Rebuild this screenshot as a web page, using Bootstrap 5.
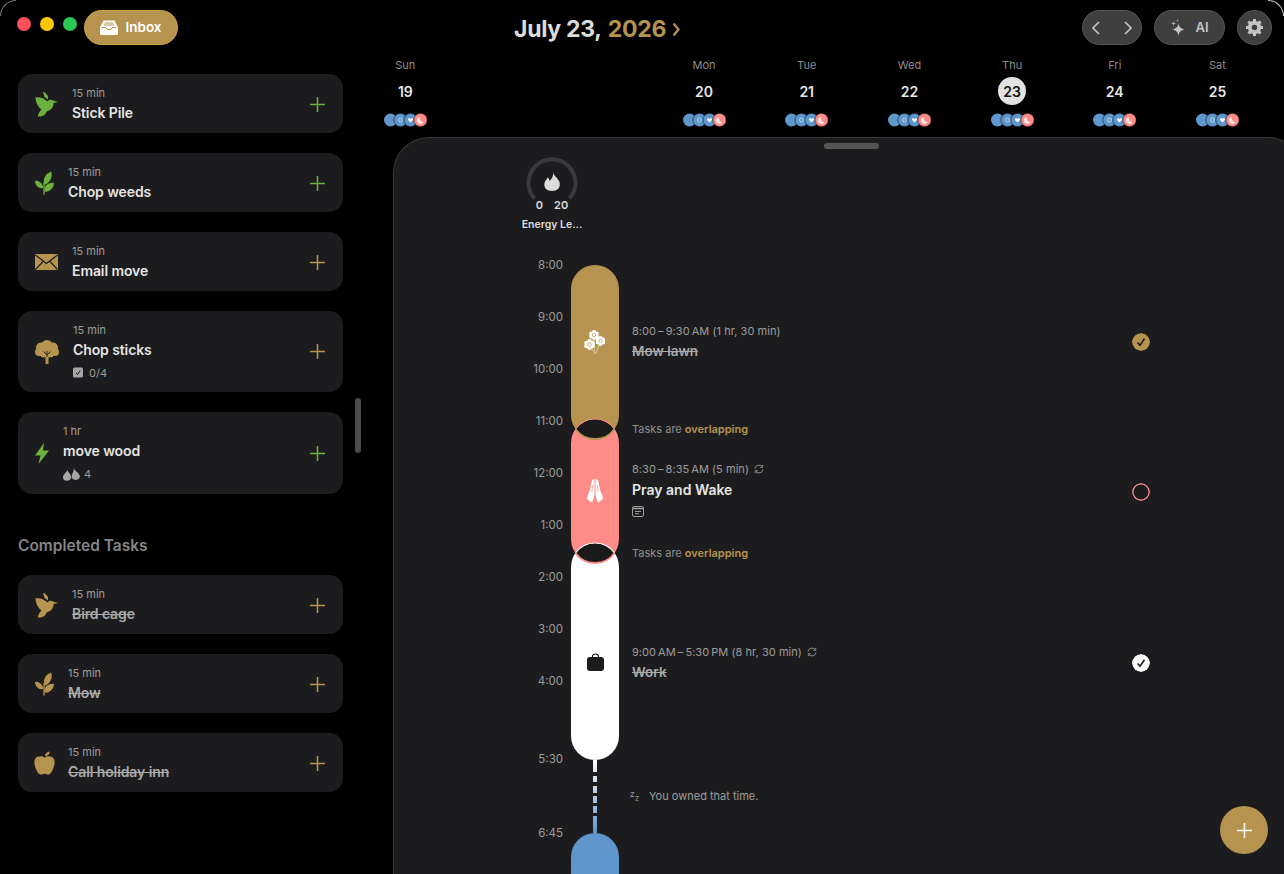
<!DOCTYPE html>
<html>

<head>
  <meta charset="utf-8">
  <meta name="viewport" content="width=device-width">
  <title>Inbox</title>
  <link href="https://cdn.jsdelivr.net/npm/bootstrap@5.3.2/dist/css/bootstrap.min.css" rel="stylesheet">
  <script src="https://cdn.jsdelivr.net/npm/bootstrap@5.3.2/dist/js/bootstrap.bundle.min.js"></script>
  <style>
    :root {
      --gold: #b6944f;
      --green: #6cb03e;
      --pink: #fd8b88;
      --blue: #5f96cc;
      --panel: #1c1c1e;
    }

    body {
      background: #000;
      font-family: Inter, "Liberation Sans", sans-serif;
      overflow: hidden;
      color: #e0e0e0;
    }

    .app-shell { width: 1284px; height: 874px; position: relative; overflow: hidden; }
    .side-col { width: 354px; flex: none; padding-left: 18px; position: relative; }
    .main-col { width: 930px; flex: none; }

    .title-strip { height: 74px; padding-top: 10px; margin-left: -18px; }
    .traffic { width: 14px; height: 14px; border-radius: 50%; margin-top: 7px; }
    .traffic-r { background: #ff4f58; margin-left: 17px; }
    .traffic-y { background: #ffc700; margin-left: 9px; }
    .traffic-g { background: #2bc653; margin-left: 9px; }
    .inbox-pill {
      margin-left: 7px; height: 35px; width: 94px; border-radius: 18px;
      background: var(--gold); border: 1px solid #cda73f; color: #fff;
      font-size: 13.5px; font-weight: 600; gap: 7px;
    }

    .task-card {
      width: 325px; min-height: 59px; margin-bottom: 20px; padding: 12px 18px 10px 17px;
      background: var(--panel); border-radius: 14px; gap: 14px;
    }
    .task-card > svg:first-child, .task-plus { margin-top: -1px; }
    .task-tall { height: 81px; padding: 11px 18px 11px 17px; }
    .task-taller { height: 82px; padding: 11px 18px 11px 17px; }
    .task-time { font-size: 11px; line-height: 14px; color: #9c9c9c; }
    .task-name { font-size: 14px; line-height: 20px; margin-top: 3px; font-weight: 600; color: #e4e4e4; letter-spacing: -.1px; }
    .task-done { color: #a9a9a9; text-decoration: line-through; }
    .task-sub { font-size: 11px; line-height: 16px; margin-top: 5px; color: #9c9c9c; gap: 5px; }
    .task-taller .task-sub { gap: 4px; }
    .task-plus { margin-left: auto; flex: none; }
    .task-tall .task-plus, .task-tall > svg:first-child, .task-taller .task-plus, .task-taller > svg:first-child { margin-top: 0; }
    .task-card > .icon-apple { margin: -1px -1px 0; }
    .done-head { font-size: 15.5px; line-height: 20px; font-weight: 600; color: #858585; margin: 42px 0 19px; }
    .side-scroll { position: absolute; left: 355px; top: 398px; width: 6px; height: 55px; border-radius: 3px; background: #4a4a4a; }

    .top-strip { height: 55px; padding: 10px 12px 0 160px; }
    .date-title { font-size: 23px; line-height: 38px; font-weight: 700; letter-spacing: -.3px; color: #dcdcdc; }
    .date-year { color: var(--gold); margin-left: 1px; }
    .date-arrow { width: 8px; height: 15px; margin-left: 6px; }
    .round-btn {
      height: 35px; border-radius: 18px; background: #3f3f3f; border: 1px solid #555;
      color: #c4c4c4; font-size: 13px; font-weight: 600; padding: 0;
    }
    .nav-btn { width: 60px; padding: 0 9px; margin-left: auto; }
    .ai-btn { width: 71px; margin-left: 12px; gap: 9px; }
    .gear-btn { width: 35px; margin-left: 12px; }

    .week-strip { height: 82px; }
    .day-col { width: 102.7px; flex: none; }
    .day-gap { margin-left: 196px; }
    .day-name { font-size: 11px; line-height: 14px; margin-top: 3px; color: #8c8c8c; }
    .day-num { width: 28px; height: 28px; margin-top: 5px; border-radius: 50%; font-size: 14px; font-weight: 600; color: #e6e6e6; }
    .day-today { background: #e2e2e2; color: #111; }
    .day-dots { width: 43px; height: 14px; margin-top: 8px; display: block; }

    .plan-panel {
      margin: 0 -20px 0 39px; height: 737px; overflow: hidden; position: relative;
      background: var(--panel); border: 1px solid #3a3a3c; border-width: 1px 0 0 1px;
      border-radius: 36px 36px 0 0;
    }
    .drag-bar { width: 55px; height: 6px; border-radius: 3px; background: #555; margin: 5px auto 0 430px; }
    .energy-box { width: 80px; margin: 8px 0 0 118px; }
    .energy-box svg { display: block; }
    .energy-nums { font-size: 11px; line-height: 14px; font-weight: 600; margin-top: -11px; gap: 11px; color: #dcdcdc; }
    .energy-name { font-size: 10.5px; line-height: 14px; font-weight: 600; margin-top: 6px; white-space: nowrap; color: #dcdcdc; }

    .time-line { margin: 33px 0 0 109px; }
    .hour-col { width: 60px; margin-top: -8px; flex: none; }
    .hour-col div { font-size: 11.5px; line-height: 16px; margin-bottom: 36px; text-align: right; color: #9c9c9c; }
    .hour-col .hour-gap-a { margin-bottom: 62px; }
    .hour-col .hour-gap-b { margin-bottom: 58px; }

    .pill-col { width: 48px; margin-left: 8px; flex: none; }
    .task-pill { width: 48px; border-radius: 24px; position: relative; }
    .pill-gold { height: 174px; background: var(--gold); padding-bottom: 20px; }
    .pill-pink { height: 144px; margin-top: -20px; background: var(--pink); }
    .pill-white { height: 217px; margin-top: -20px; background: #fff; padding-top: 20px; }
    .pill-blue { height: 90px; background: var(--blue); }
    .overlap-lens { position: absolute; top: 0; left: 0; width: 48px; height: 20px; overflow: visible; }
    .idle-dash { display: block; width: 4px; height: 73px; margin: 0 auto; }

    .info-col { margin-left: 13px; width: 518px; flex: none; }
    .row-a { height: 154px; }
    .row-note { height: 20px; font-size: 11px; color: #8f8f8f; }
    .row-note b { color: var(--gold); font-weight: 600; }
    .row-b { height: 104px; }
    .row-c { height: 197px; }
    .row-idle { height: 73px; font-size: 11px; color: #9c9c9c; gap: 8px; margin-left: -2px; }
    .info-time { font-size: 11px; line-height: 14px; color: #9c9c9c; gap: 5px; letter-spacing: .05px; }
    .info-name { font-size: 14px; line-height: 20px; margin-top: 3px; font-weight: 600; color: #e4e4e4; }
    .info-name.task-done { font-size: 13.5px; color: #a9a9a9; }
    .info-gap { margin-top: 4px; }
    .info-icon { margin-top: 6px; display: block; }
    .info-low { margin-top: 4px; }
    .info-up { margin-bottom: 3px; }
    .zz-mark { width: 11px; line-height: 7px; font-size: 8.5px; }
    .zz-mark span { display: block; }
    .zz-mark span + span { margin-left: 5px; margin-top: -3px; font-size: 7.5px; }
    .check-mark { width: 18px; height: 18px; border-radius: 50%; flex: none; }
    .check-low { margin-top: 2px; }
    .fab-add {
      position: absolute; right: 36px; bottom: 20px; width: 48px; height: 48px; padding: 0;
      border-radius: 50%; border: 0; background: var(--gold);
    }
    .win-corner { position: absolute; top: 0; width: 16px; height: 16px; border: 0 solid #777; }
    .win-corner-l { left: 0; border-width: 1px 0 0 1px; border-top-left-radius: 16px; }
    .win-corner-r { right: 0; border-width: 1px 1px 0 0; border-top-right-radius: 16px; border-color: #bbb; }
  </style>
</head>

<body>
  <svg width="0" height="0" class="position-absolute">
    <symbol id="ic-bird" viewBox="0 0 23 25">
      <path d="M.5 5.500C4 4.500 9 6 12.500 9.500C13.500 7.500 16 7 18 8.500L23 10L18.500 11C19 15 15.500 18.500 11.500 19.500C11 22 8.500 25 3 24.500C2.500 23 4.500 19.500 6.500 17.500C3 15 .5 10 .5 5.500Z" fill="currentColor" />
      <path d="M8 0L10 .5L13 4L13 7.500L9.500 5Z" fill="currentColor" />
    </symbol>
    <symbol id="ic-sprout" viewBox="0 0 20 24">
      <path d="M9.500 24V11" stroke="currentColor" stroke-width="1.400" fill="none" />
      <path d="M10 14C8 8 11 2 17 0C19 6 16 12 10 14Z M9 17C7 11 3 9 0 10C0 14 4 19 9 17Z M10 21C9 15 14 11 20 12C20 17 15 22 10 21Z" fill="currentColor" />
    </symbol>
    <symbol id="ic-plus" viewBox="0 0 15 15">
      <path d="M7.500 0V15M0 7.500H15" stroke="currentColor" stroke-width="1.500" fill="none" />
    </symbol>
    <symbol id="ic-repeat" viewBox="0 0 10 10">
      <path d="M1 4.500A4 4 0 0 1 8 2.500M9 5.500A4 4 0 0 1 2 7.500" stroke="currentColor" stroke-width=".9" fill="none" />
      <path d="M8.700 .8V3.300H6.300M1.300 9.200V6.700H3.700" stroke="currentColor" stroke-width=".9" fill="none" />
    </symbol>
    <symbol id="ic-dots" viewBox="0 0 43 14">
      <circle cx="6.500" cy="7" r="6.500" fill="#5f96cc" />
      <circle cx="16.500" cy="7" r="6.700" fill="#5f96cc" stroke="#000" stroke-width=".5" />
      <circle cx="16.500" cy="7" r="2" fill="none" stroke="#b9d2ea" stroke-width="1" />
      <circle cx="26.500" cy="7" r="6.700" fill="#5f96cc" stroke="#000" stroke-width=".5" />
      <path d="M24 5.800C24.800 4.800 26.200 5.100 26.500 6C26.800 5.100 28.200 4.800 29 5.800C29.500 6.800 28 8.300 26.500 9.300C25 8.300 23.500 6.800 24 5.800Z" fill="#fff" />
      <circle cx="36.500" cy="7" r="6.700" fill="#fd8b88" stroke="#000" stroke-width=".5" />
      <path d="M36 4A3.500 3.500 0 1 0 39.500 9A3.800 3.800 0 0 1 36 4Z" fill="#fde3e2" />
    </symbol>
    <symbol id="ic-daisy" viewBox="0 0 12 12">
      <g fill="#fff">
        <circle cx="6" cy="2.500" r="2.500" />
        <circle cx="9.300" cy="4.300" r="2.500" />
        <circle cx="9.300" cy="7.700" r="2.500" />
        <circle cx="6" cy="9.500" r="2.500" />
        <circle cx="2.700" cy="7.700" r="2.500" />
        <circle cx="2.700" cy="4.300" r="2.500" />
        <circle cx="6" cy="6" r="3" />
      </g>
      <circle cx="6" cy="6" r="2" fill="#fff" stroke="#b6944f" stroke-width=".8" />
    </symbol>
  </svg>

  <div class="app-shell d-flex">
    <aside class="side-col">
      <div class="title-strip d-flex align-items-start">
        <div class="traffic traffic-r"></div>
        <div class="traffic traffic-y"></div>
        <div class="traffic traffic-g"></div>
        <div class="inbox-pill d-flex align-items-center justify-content-center">
          <svg width="18" height="15" viewBox="0 0 18 15">
            <path d="M3.500 .5H14.500L18 7.500V13.500Q18 15 16.500 15H1.500Q0 15 0 13.500V7.500Z" fill="#fff" />
            <path d="M4.500 3H13.500M3.800 5H14.200" stroke="#b6944f" stroke-width="1" />
            <path d="M1.500 7.500H6L7 9.500H11L12 7.500H16.500" stroke="#b6944f" stroke-width="1" fill="none" />
          </svg>
          Inbox
        </div>
      </div>

      <div class="task-card d-flex align-items-center">
        <svg width="23" height="25" style="color:#6cb03e"><use href="#ic-bird" /></svg>
        <div>
          <div class="task-time">15 min</div>
          <div class="task-name">Stick Pile</div>
        </div>
        <svg class="task-plus" width="15" height="15" style="color:#6cb03e"><use href="#ic-plus" /></svg>
      </div>

      <div class="task-card d-flex align-items-center">
        <svg width="19" height="24" style="color:#6cb03e"><use href="#ic-sprout" /></svg>
        <div>
          <div class="task-time">15 min</div>
          <div class="task-name">Chop weeds</div>
        </div>
        <svg class="task-plus" width="15" height="15" style="color:#6cb03e"><use href="#ic-plus" /></svg>
      </div>

      <div class="task-card d-flex align-items-center">
        <svg width="23" height="16" viewBox="0 0 23 16">
          <rect width="23" height="16" rx="1" fill="#b6944f" />
          <path d="M.5 1L11.500 9.500L22.500 1M.5 15.500L8.500 7M22.500 15.500L14.500 7" stroke="#1c1c1e" stroke-width="1.100" fill="none" />
        </svg>
        <div>
          <div class="task-time">15 min</div>
          <div class="task-name">Email move</div>
        </div>
        <svg class="task-plus" width="15" height="15" style="color:#b6944f"><use href="#ic-plus" /></svg>
      </div>

      <div class="task-card task-tall d-flex align-items-center">
        <svg width="24" height="24" viewBox="0 0 24 24">
          <g fill="#b6944f">
            <circle cx="12" cy="6" r="6" />
            <circle cx="6" cy="7.500" r="5" />
            <circle cx="18" cy="7.500" r="5" />
            <circle cx="4" cy="12" r="4" />
            <circle cx="20" cy="12" r="4" />
            <circle cx="9" cy="13" r="4.500" />
            <circle cx="15" cy="13" r="4.500" />
            <path d="M10.500 14H13.500V24H10.500Z" />
          </g>
          <path d="M12 17V11M12 15L8.500 11.500M12 15L15.500 11.500" stroke="#1c1c1e" stroke-width=".9" fill="none" />
        </svg>
        <div>
          <div class="task-time">15 min</div>
          <div class="task-name">Chop sticks</div>
          <div class="task-sub d-flex align-items-center">
            <svg width="11" height="11" viewBox="0 0 11 11">
              <rect width="10" height="10" rx="1.500" y=".5" fill="#a5a5a5" />
              <path d="M3 5.800L4.500 7.500L7.200 3.500" stroke="#1c1c1e" stroke-width="1" fill="none" />
            </svg>
            0/4
          </div>
        </div>
        <svg class="task-plus" width="15" height="15" style="color:#b6944f"><use href="#ic-plus" /></svg>
      </div>

      <div class="task-card task-taller d-flex align-items-center">
        <svg width="14" height="21" viewBox="0 0 14 21">
          <path d="M9 0L0 12.500H5.500L3.500 21L14 7.500H8Z" fill="#6cb03e" />
        </svg>
        <div>
          <div class="task-time">1 hr</div>
          <div class="task-name">move wood</div>
          <div class="task-sub d-flex align-items-center">
            <svg width="17" height="13" viewBox="0 0 17 13">
              <path d="M4.500 2C4.500 4 8 5.500 8 9A4 3.800 0 0 1 0 9C0 6.500 3 5 4.500 2Z" fill="#a5a5a5" />
              <path d="M11 0C11.500 3.500 17 5 17 9A4.500 3.900 0 0 1 8.500 9.500C8.500 6 11 3.500 11 0Z" fill="#a5a5a5" />
            </svg>
            4
          </div>
        </div>
        <svg class="task-plus" width="15" height="15" style="color:#6cb03e"><use href="#ic-plus" /></svg>
      </div>

      <div class="done-head">Completed Tasks</div>

      <div class="task-card d-flex align-items-center">
        <svg width="23" height="25" style="color:#b6944f"><use href="#ic-bird" /></svg>
        <div>
          <div class="task-time">15 min</div>
          <div class="task-name task-done">Bird cage</div>
        </div>
        <svg class="task-plus" width="15" height="15" style="color:#b6944f"><use href="#ic-plus" /></svg>
      </div>

      <div class="task-card d-flex align-items-center">
        <svg width="19" height="24" style="color:#b6944f"><use href="#ic-sprout" /></svg>
        <div>
          <div class="task-time">15 min</div>
          <div class="task-name task-done">Mow</div>
        </div>
        <svg class="task-plus" width="15" height="15" style="color:#b6944f"><use href="#ic-plus" /></svg>
      </div>

      <div class="task-card d-flex align-items-center">
        <svg class="icon-apple" width="21" height="24" viewBox="0 0 21 24">
          <path d="M10.500 6.500C13 4.800 18 4.800 20 8C21.500 11.500 20 17 17.500 21C16 23.500 14 24 12.500 23.300C11 22.700 10 22.700 8.500 23.300C7 24 5 23.500 3.500 21C1 17 -.5 11.500 1 8C3 4.800 8 4.800 10.500 6.500Z" fill="#b6944f" />
          <path d="M11 5C11 2.500 13 1 16 .5C15.500 3 14 5 11 5Z" fill="#b6944f" />
        </svg>
        <div>
          <div class="task-time">15 min</div>
          <div class="task-name task-done">Call holiday inn</div>
        </div>
        <svg class="task-plus" width="15" height="15" style="color:#b6944f"><use href="#ic-plus" /></svg>
      </div>

      <div class="side-scroll"></div>
    </aside>

    <main class="main-col">
      <div class="top-strip d-flex align-items-start">
        <div class="date-title d-flex align-items-center">July 23,&nbsp;<span class="date-year">2026</span>
          <svg class="date-arrow" viewBox="0 0 8 15"><path d="M1.500 1.500L6.500 7.500L1.500 13.500" stroke="#b6944f" stroke-width="2.200" fill="none" /></svg>
        </div>
        <div class="round-btn nav-btn d-flex align-items-center justify-content-between">
          <svg width="8" height="14" viewBox="0 0 8 14"><path d="M7 1L1 7L7 13" stroke="#c4c4c4" stroke-width="1.600" fill="none" /></svg>
          <svg width="8" height="14" viewBox="0 0 8 14"><path d="M1 1L7 7L1 13" stroke="#c4c4c4" stroke-width="1.600" fill="none" /></svg>
        </div>
        <div class="round-btn ai-btn d-flex align-items-center justify-content-center">
          <svg width="16" height="17" viewBox="0 0 16 17">
            <path d="M8.500 4C9 8 11 10 15 10.500C11 11 9 13 8.500 17C8 13 6 11 2 10.500C6 10 8 8 8.500 4Z" fill="#c4c4c4" />
            <path d="M3.500 2L4 4L6 4.500L4 5L3.500 7L3 5L1 4.500L3 4Z M7.500 0L7.800 1.200L9 1.500L7.800 1.800L7.500 3L7.200 1.800L6 1.500L7.200 1.200Z" fill="#c4c4c4" />
          </svg>
          AI
        </div>
        <div class="round-btn gear-btn d-flex align-items-center justify-content-center">
          <svg width="17" height="17" viewBox="0 0 18 18">
            <circle cx="9" cy="9" r="5" fill="none" stroke="#c4c4c4" stroke-width="4.200" />
            <path d="M9 0V18M0 9H18M2.600 2.600L15.400 15.400M15.400 2.600L2.600 15.400" stroke="#c4c4c4" stroke-width="3.200" stroke-dasharray="3.200 11.600 3.200" />
          </svg>
        </div>
      </div>

      <div class="week-strip d-flex">
        <div class="day-col d-flex flex-column align-items-center">
          <div class="day-name">Sun</div>
          <div class="day-num d-flex align-items-center justify-content-center">19</div>
          <svg class="day-dots"><use href="#ic-dots" /></svg>
        </div>
        <div class="day-col day-gap d-flex flex-column align-items-center">
          <div class="day-name">Mon</div>
          <div class="day-num d-flex align-items-center justify-content-center">20</div>
          <svg class="day-dots"><use href="#ic-dots" /></svg>
        </div>
        <div class="day-col d-flex flex-column align-items-center">
          <div class="day-name">Tue</div>
          <div class="day-num d-flex align-items-center justify-content-center">21</div>
          <svg class="day-dots"><use href="#ic-dots" /></svg>
        </div>
        <div class="day-col d-flex flex-column align-items-center">
          <div class="day-name">Wed</div>
          <div class="day-num d-flex align-items-center justify-content-center">22</div>
          <svg class="day-dots"><use href="#ic-dots" /></svg>
        </div>
        <div class="day-col d-flex flex-column align-items-center">
          <div class="day-name">Thu</div>
          <div class="day-num day-today d-flex align-items-center justify-content-center">23</div>
          <svg class="day-dots"><use href="#ic-dots" /></svg>
        </div>
        <div class="day-col d-flex flex-column align-items-center">
          <div class="day-name">Fri</div>
          <div class="day-num d-flex align-items-center justify-content-center">24</div>
          <svg class="day-dots"><use href="#ic-dots" /></svg>
        </div>
        <div class="day-col d-flex flex-column align-items-center">
          <div class="day-name">Sat</div>
          <div class="day-num d-flex align-items-center justify-content-center">25</div>
          <svg class="day-dots"><use href="#ic-dots" /></svg>
        </div>
      </div>

      <section class="plan-panel">
        <div class="drag-bar"></div>

        <div class="energy-box d-flex flex-column align-items-center">
          <svg width="52" height="52" viewBox="0 0 52 52">
            <path d="M8.500 41.500A23.500 23.500 0 1 1 43.500 41.500" stroke="#3a3a3c" stroke-width="4" fill="none" />
            <path d="M27 15C27.500 19 31 19.500 33.500 25C35 31 31 34 26 34C21 34 17.500 31 18.500 26C19 23.500 21 22.500 21.500 20.500C23 21.500 23.500 22.500 23.500 24C26 22 27.500 19 27 15Z" fill="#dcdcdc" />
          </svg>
          <div class="energy-nums d-flex"><span>0</span><span>20</span></div>
          <div class="energy-name">Energy Le...</div>
        </div>

        <div class="time-line d-flex">
          <div class="hour-col">
            <div>8:00</div>
            <div>9:00</div>
            <div>10:00</div>
            <div>11:00</div>
            <div>12:00</div>
            <div>1:00</div>
            <div>2:00</div>
            <div>3:00</div>
            <div class="hour-gap-a">4:00</div>
            <div class="hour-gap-b">5:30</div>
            <div>6:45</div>
          </div>

          <div class="pill-col">
            <div class="task-pill pill-gold d-flex align-items-center justify-content-center">
              <svg width="22" height="24" viewBox="0 0 22 24">
                <path d="M7 17L11 24M15 15L12 24M10 10L11 24" stroke="#dcc698" stroke-width="1" fill="none" />
                <use href="#ic-daisy" x="5" y="0" width="10" height="10" />
                <use href="#ic-daisy" x="11.500" y="6" width="10" height="10" />
                <use href="#ic-daisy" x="0" y="9" width="11" height="11" />
              </svg>
            </div>
            <div class="task-pill pill-pink d-flex align-items-center justify-content-center">
              <svg class="overlap-lens" viewBox="0 0 48 20">
                <path d="M4.500 10A24 24 0 0 1 43.500 10A24 24 0 0 1 4.500 10Z" fill="#1a1a1b" />
                <path d="M4.500 10A24 24 0 0 1 43.500 10" fill="none" stroke="#fd8b88" stroke-width="1.200" />
                <path d="M43.500 10A24 24 0 0 1 4.500 10" fill="none" stroke="#b6944f" stroke-width="1.800" />
              </svg>
              <svg width="16" height="24" viewBox="0 0 16 24">
                <path d="M7.500 0C5.500 0 4.800 1.500 4.500 3L3 11L.8 16L0 20L5 23.500L6.500 20L7.500 16Z M8.500 0C10.500 0 11.200 1.500 11.500 3L13 11L15.200 16L16 20L11 23.500L9.500 20L8.500 16Z" fill="#fff" />
                <path d="M5.700 6L4.800 13M10.300 6L11.200 13" stroke="#fd8b88" stroke-width=".7" fill="none" />
              </svg>
            </div>
            <div class="task-pill pill-white d-flex align-items-center justify-content-center">
              <svg class="overlap-lens" viewBox="0 0 48 20">
                <path d="M4.500 10A24 24 0 0 1 43.500 10A24 24 0 0 1 4.500 10Z" fill="#1a1a1b" />
                <path d="M4.500 10A24 24 0 0 1 43.500 10" fill="none" stroke="#fff" stroke-width="1.200" />
                <path d="M43.500 10A24 24 0 0 1 4.500 10" fill="none" stroke="#fd8b88" stroke-width="1.800" />
              </svg>
              <svg width="17" height="18" viewBox="0 0 17 18">
                <path d="M5.500 4.500V3.500Q5.500 1 8.500 1Q11.500 1 11.500 3.500V4.500" fill="none" stroke="#1c1c1e" stroke-width="1.200" />
                <rect y="4" width="17" height="14" rx="3" fill="#1c1c1e" />
              </svg>
            </div>
            <svg class="idle-dash" viewBox="0 0 4 73">
              <defs>
                <linearGradient id="idleFade" x1="0" y1="0" x2="0" y2="1">
                  <stop offset="0" stop-color="#fff" />
                  <stop offset="1" stop-color="#5f96cc" />
                </linearGradient>
              </defs>
              <path d="M0 0H4V12H0ZM0 16H4V22H0ZM0 26H4V33H0ZM0 36H4V43H0ZM0 46H4V53H0ZM0 56H4V73H0Z" fill="url(#idleFade)" />
            </svg>
            <div class="task-pill pill-blue"></div>
          </div>

          <div class="info-col">
            <div class="row-a d-flex align-items-center justify-content-between">
              <div>
                <div class="info-time d-flex align-items-center">8:00&#8201;–&#8201;9:30&#8239;AM (1 hr, 30 min)</div>
                <div class="info-name task-done">Mow lawn</div>
              </div>
              <svg class="check-mark" viewBox="0 0 18 18">
                <circle cx="9" cy="9" r="9" fill="#b6944f" />
                <path d="M5.500 9.500L8 12.300L12.500 5.800" stroke="#1c1c1e" stroke-width="1.600" fill="none" />
              </svg>
            </div>
            <div class="row-note d-flex align-items-center">Tasks are&nbsp;<b>overlapping</b></div>
            <div class="row-b d-flex align-items-center justify-content-between">
              <div class="info-up">
                <div class="info-time d-flex align-items-center">8:30&#8201;–&#8201;8:35&#8239;AM (5 min)
                  <svg width="10" height="10" style="color:#9c9c9c"><use href="#ic-repeat" /></svg>
                </div>
                <div class="info-name info-gap">Pray and Wake</div>
                <svg class="info-icon" width="12" height="11" viewBox="0 0 12 11">
                  <rect x=".5" y=".5" width="11" height="10" rx="1.500" fill="none" stroke="#9c9c9c" />
                  <path d="M.5 2.500H11.500" stroke="#9c9c9c" stroke-width="1.600" />
                  <path d="M3 5.500H9M3 7.800H7" stroke="#9c9c9c" />
                </svg>
              </div>
              <svg class="check-mark check-low" viewBox="0 0 18 18">
                <circle cx="9" cy="9" r="8.200" fill="none" stroke="#fd8b88" stroke-width="1.500" />
              </svg>
            </div>
            <div class="row-note d-flex align-items-center">Tasks are&nbsp;<b>overlapping</b></div>
            <div class="row-c d-flex align-items-center justify-content-between">
              <div class="info-low">
                <div class="info-time d-flex align-items-center">9:00&#8239;AM&#8201;–&#8201;5:30&#8239;PM (8 hr, 30 min)
                  <svg width="10" height="10" style="color:#9c9c9c"><use href="#ic-repeat" /></svg>
                </div>
                <div class="info-name task-done">Work</div>
              </div>
              <svg class="check-mark check-low" viewBox="0 0 18 18">
                <circle cx="9" cy="9" r="9" fill="#fff" />
                <path d="M5.500 9.500L8 12.300L12.500 5.800" stroke="#1c1c1e" stroke-width="1.600" fill="none" />
              </svg>
            </div>
            <div class="row-idle d-flex align-items-center">
              <div class="zz-mark"><span>z</span><span>z</span></div>
              You owned that time.
            </div>
          </div>
        </div>

        <button class="fab-add d-flex align-items-center justify-content-center" type="button" aria-label="Add">
          <svg width="15" height="15" style="color:#fff"><use href="#ic-plus" /></svg>
        </button>
      </section>
    </main>

    <div class="win-corner win-corner-l"></div>
    <div class="win-corner win-corner-r"></div>
  </div>
</body>

</html>
